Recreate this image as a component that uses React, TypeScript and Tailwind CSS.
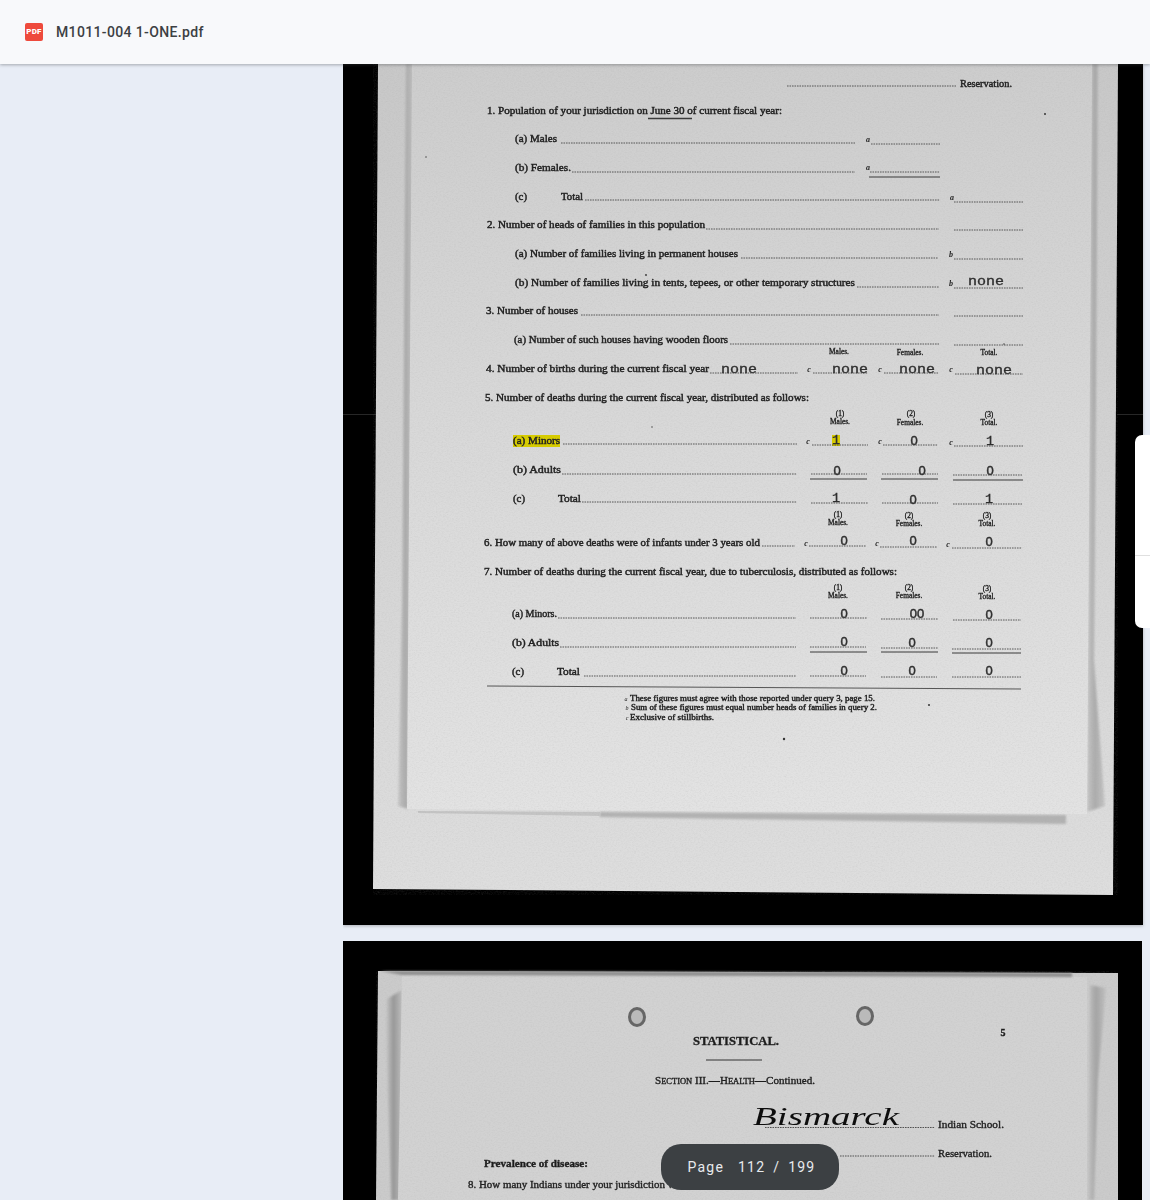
type Txt = [string, number, number, number?] // text, x start, centre y, x end

const FORM_TEXT: Txt[] = [
  ['Reservation.', 960, 84, 1012],
  ['1. Population of your jurisdiction on June 30 of current fiscal year:', 487, 111, 782],
  ['(a) Males', 515, 139, 557],
  ['(b) Females.', 515, 168, 571],
  ['(c)', 515, 197, 527],
  ['Total', 561, 197, 583],
  ['2. Number of heads of families in this population', 487, 225, 705],
  ['(a) Number of families living in permanent houses', 515, 254, 738],
  ['(b) Number of families living in tents, tepees, or other temporary structures', 515, 283, 855],
  ['3. Number of houses', 486, 311, 578],
  ['(a) Number of such houses having wooden floors', 514, 340, 728],
  ['4. Number of births during the current fiscal year', 486, 369, 709],
  ['5. Number of deaths during the current fiscal year, distributed as follows:', 485, 398, 809],
  ['(a) Minors', 513, 441, 560],
  ['(b) Adults', 513, 470, 561],
  ['(c)', 513, 499, 525],
  ['Total', 558, 499, 581],
  ['6. How many of above deaths were of infants under 3 years old', 484, 543, 760],
  ['7. Number of deaths during the current fiscal year, due to tuberculosis, distributed as follows:', 484, 572, 897],
  ['(a) Minors.', 512, 614, 557],
  ['(b) Adults', 512, 643, 559],
  ['(c)', 512, 672, 524],
  ['Total', 557, 672, 580],
]

// column captions: label, centre x, y
const CAPTIONS: [string, number, number][] = [
  ['Males.', 839, 352], ['Females.', 910, 353], ['Total.', 989, 353],
  ['(1)', 840, 414], ['Males.', 840, 422], ['(2)', 911, 414], ['Females.', 910, 423], ['(3)', 989, 415], ['Total.', 989, 423],
  ['(1)', 838, 515], ['Males.', 838, 523], ['(2)', 909, 516], ['Females.', 909, 524], ['(3)', 987, 516], ['Total.', 987, 524],
  ['(1)', 838, 588], ['Males.', 838, 596], ['(2)', 909, 588], ['Females.', 909, 596], ['(3)', 987, 589], ['Total.', 987, 597],
]

const MARKS: [string, number, number][] = [
  ['a', 868, 140], ['a', 868, 168], ['a', 952, 198], ['b', 951, 255], ['b', 951, 284],
  ['c', 809, 370], ['c', 880, 370], ['c', 951, 370],
  ['c', 808, 442], ['c', 880, 442], ['c', 951, 443],
  ['c', 806, 544], ['c', 877, 544], ['c', 948, 545],
]

// dotted rules: x1, x2, y
const DOTTED: [number, number, number][] = [
  [787, 956, 86], [561, 855, 143], [871, 940, 144], [572, 855, 172], [870, 940, 172],
  [585, 940, 200], [954, 1023, 202], [706, 939, 229], [954, 1023, 230], [741, 938, 258], [954, 1023, 259],
  [857, 939, 287], [954, 1023, 288], [581, 939, 315], [954, 1023, 316], [730, 939, 344], [954, 1023, 345],
  [710, 798, 373], [813, 868, 373], [884, 938, 373], [955, 1023, 374],
  [563, 797, 444], [812, 868, 445], [883, 938, 445], [954, 1023, 446],
  [562, 797, 474], [811, 867, 474], [882, 938, 474], [953, 1022, 475],
  [582, 797, 502], [811, 868, 503], [882, 938, 503], [953, 1022, 504],
  [762, 795, 546], [809, 866, 546], [880, 937, 547], [952, 1022, 548],
  [558, 796, 618], [810, 867, 618], [881, 938, 619], [953, 1021, 620],
  [560, 796, 647], [810, 866, 647], [881, 938, 648], [952, 1021, 649],
  [584, 796, 676], [810, 866, 676], [881, 937, 677], [952, 1021, 677],
]

const SOLID: [number, number, number, number][] = [
  [648, 692, 118.5, 1.6], [869, 940, 177, 1.2],
  [810, 867, 479, 1], [881, 938, 479, 1], [953, 1023, 480, 1],
  [810, 867, 652, 1], [881, 938, 652, 1], [952, 1021, 653, 1],
]

// typed answers: text, centre x, y
const TYPED: [string, number, number][] = [
  ['none', 986, 281], ['none', 739, 369], ['none', 850, 369], ['none', 917, 369], ['none', 994, 370],
  ['1', 836, 440], ['0', 914, 440], ['1', 990, 441],
  ['0', 837, 470], ['0', 922, 470], ['0', 990, 470],
  ['1', 836, 498], ['0', 913, 499], ['1', 989, 499],
  ['0', 844, 540], ['0', 913, 540], ['0', 989, 541],
  ['0', 844, 613], ['00', 917, 613], ['0', 989, 614],
  ['0', 844, 641], ['0', 912, 642], ['0', 989, 642],
  ['0', 844, 670], ['0', 912, 670], ['0', 989, 670],
]

const SPECKS: [number, number, number][] = [
  [1045, 114, 1], [646, 275, 0.9], [652, 427, 0.7], [929, 705, 1], [784, 739, 1.2], [426, 157, 0.7], [1004, 344, 0.7],
]

function Line({ t, size = 9.6, heavy = 0.42 }: { t: Txt; size?: number; heavy?: number }) {
  return (
    <text
      x={t[1]}
      y={t[2] + size * 0.3}
      fontSize={size}
      stroke="#222"
      strokeWidth={heavy}
      textLength={t[3] ? t[3] - t[1] : undefined}
      lengthAdjust="spacingAndGlyphs"
    >
      {t[0]}
    </text>
  )
}

function Typed({ s, x, y }: { s: string; x: number; y: number }) {
  if (s === 'none' || s === '1') {
    return (
      <text
        x={x}
        y={y + 4}
        fontSize={13.5}
        textAnchor="middle"
        stroke="#2e2e2e"
        strokeWidth="0.35"
        textLength={s === 'none' ? 36 : undefined}
        lengthAdjust="spacingAndGlyphs"
        className="font-['Liberation_Mono',monospace]"
      >
        {s}
      </text>
    )
  }
  // the typewriter's zero is a plain oval, no slash
  return (
    <text
      x={x}
      y={y + 4.5}
      fontSize={13}
      textAnchor="middle"
      stroke="#2e2e2e"
      strokeWidth="0.45"
      className="font-['Liberation_Sans',sans-serif]"
    >
      {s}
    </text>
  )
}

function Defs({ id }: { id: string }) {
  return (
    <defs>
      <linearGradient id={`${id}-sheet`} x1="0" y1="0" x2="0" y2="1">
        <stop offset="0" stopColor="#cdcdcd" />
        <stop offset="0.5" stopColor="#d9d9d9" />
        <stop offset="1" stopColor="#e3e3e3" />
      </linearGradient>
      <linearGradient id={`${id}-back`} x1="0" y1="0" x2="0" y2="1">
        <stop offset="0" stopColor="#c8c8c8" />
        <stop offset="0.6" stopColor="#d6d6d6" />
        <stop offset="1" stopColor="#dedede" />
      </linearGradient>
      <linearGradient id={`${id}-strip`} x1="0" y1="0" x2="1" y2="0">
        <stop offset="0" stopColor="#c4c4c4" />
        <stop offset="0.45" stopColor="#a4a4a4" />
        <stop offset="1" stopColor="#c2c2c2" />
      </linearGradient>
      <linearGradient id={`${id}-left`} x1="0" y1="0" x2="1" y2="0">
        <stop offset="0" stopColor="#cfcfcf" />
        <stop offset="0.5" stopColor="#8f8f8f" />
        <stop offset="1" stopColor="#bcbcbc" />
      </linearGradient>
      <filter id={`${id}-grain`} x="0" y="0" width="100%" height="100%">
        <feTurbulence type="fractalNoise" baseFrequency="0.55 0.8" numOctaves="2" seed="4" />
        <feColorMatrix values="0 0 0 0 0.35  0 0 0 0 0.35  0 0 0 0 0.35  0.5 0.5 0 0 -0.42" />
      </filter>
      <filter id={`${id}-soft`} x="-5%" y="-5%" width="110%" height="110%">
        <feGaussianBlur stdDeviation="0.32" />
      </filter>
      <filter id={`${id}-blur`} x="-20%" y="-20%" width="140%" height="140%">
        <feGaussianBlur stdDeviation="1.1" />
      </filter>
    </defs>
  )
}

function ScanOne() {
  return (
    <svg viewBox="343 64 800 861" className="block h-full w-full font-['Liberation_Serif',serif]">
      <Defs id="p1" />
      <rect x="343" y="64" width="800" height="861" fill="#000" />
      {/* backing sheet */}
      <polygon points="378,64 1118,64 1113,895 373,889" fill="url(#p1-back)" />
      {/* shadows of the front sheet */}
      <polygon points="406,64 414,64 408,809 398,806 402,600" fill="url(#p1-strip)" filter="url(#p1-blur)" opacity="0.85" />
      <polygon points="1092,64 1098,64 1096,400 1094,660 1105,806 1087,812" fill="url(#p1-strip)" filter="url(#p1-blur)" opacity="0.85" />
      <polygon points="600,812 1066,815 1066,824 600,817" fill="#b2b2b2" filter="url(#p1-blur)" />
      <polygon points="418,811 600,812 600,816 418,813" fill="#c4c4c4" />
      {/* front sheet */}
      <polygon points="412,64 1092,64 1087,814 407,809" fill="url(#p1-sheet)" />
      <polygon points="378,64 1118,64 1113,895 373,889" filter="url(#p1-grain)" opacity="0.4" />

      <rect x="513" y="435" width="47" height="12" fill="#d6cb00" />
      <rect x="832" y="435" width="8" height="11" fill="#d6cb00" />

      {DOTTED.map(([a, b, y], i) => (
        <line key={i} x1={a} x2={b} y1={y} y2={y} stroke="#4a4a4a" strokeWidth="0.9" strokeDasharray="1.6 0.9" />
      ))}
      {SOLID.map(([a, b, y, w], i) => (
        <line key={i} x1={a} x2={b} y1={y} y2={y} stroke="#3a3a3a" strokeWidth={w} />
      ))}
      <line x1="487" x2="1021" y1="686" y2="689" stroke="#555" strokeWidth="1" />
      {SPECKS.map(([x, y, r], i) => (
        <circle key={i} cx={x} cy={y} r={r} fill="#333" />
      ))}

      <g fill="#222" filter="url(#p1-soft)">
        {FORM_TEXT.map((t, i) => (
          <Line key={i} t={t} />
        ))}
        {CAPTIONS.map(([s, x, y], i) => (
          <text key={i} x={x} y={y + 2.4} fontSize={7.4} stroke="#222" strokeWidth="0.32" textAnchor="middle">
            {s}
          </text>
        ))}
        {MARKS.map(([s, x, y], i) => (
          <text key={i} x={x} y={y + 2} fontSize={8} fontStyle="italic" fontWeight={700} textAnchor="middle">
            {s}
          </text>
        ))}
        <Line t={['These figures must agree with those reported under query 3, page 15.', 630, 699, 875]} size={7.6} heavy={0.38} />
        <Line t={['Sum of these figures must equal number heads of families in query 2.', 631, 708, 877]} size={7.6} heavy={0.38} />
        <Line t={['Exclusive of stillbirths.', 630, 718, 714]} size={7.6} heavy={0.38} />
        <text x="626" y="701" fontSize="6" fontStyle="italic" textAnchor="middle">a</text>
        <text x="627" y="710" fontSize="6" fontStyle="italic" textAnchor="middle">b</text>
        <text x="627" y="720" fontSize="6" fontStyle="italic" textAnchor="middle">c</text>
        <g fill="#2e2e2e">
          {TYPED.map(([s, x, y], i) => (
            <Typed key={i} s={s} x={x} y={y} />
          ))}
        </g>
      </g>

      {/* tile seam, only shows on the black margins */}
      <line x1="343" x2="376" y1="414.5" y2="414.5" stroke="#808080" strokeWidth="1" opacity="0.3" />
      <line x1="1117" x2="1143" y1="414.5" y2="414.5" stroke="#808080" strokeWidth="1" opacity="0.3" />
    </svg>
  )
}

function ScanTwo() {
  return (
    <svg viewBox="343 941 799 259" className="block h-full w-full font-['Liberation_Serif',serif]">
      <Defs id="p2" />
      <rect x="343" y="941" width="799" height="259" fill="#000" />
      <polygon points="378,971 1118,973 1118,1200 376,1200" fill="#cbcbcb" />
      <polygon points="385,1000 402,990 402,1200 391,1200" fill="url(#p2-left)" filter="url(#p2-blur)" opacity="0.85" />
      <polygon points="1090,985 1106,988 1098,1080 1094,1200 1088,1200" fill="url(#p2-strip)" filter="url(#p2-blur)" />
      <polygon points="402,975 1087,977 1087,1200 398,1200" fill="#d2d2d2" />
      <polygon points="380,971 1072,973 1072,977 402,975" fill="#8e8e8e" filter="url(#p2-blur)" />
      <polygon points="378,971 1118,973 1118,1200 376,1200" filter="url(#p2-grain)" opacity="0.4" />

      <ellipse cx="637" cy="1017" rx="7.5" ry="8.5" fill="#bababa" stroke="#666" strokeWidth="3" filter="url(#p2-soft)" />
      <ellipse cx="865" cy="1016" rx="7.5" ry="8.5" fill="#bababa" stroke="#666" strokeWidth="3" filter="url(#p2-soft)" />

      <line x1="706" x2="762" y1="1060" y2="1060" stroke="#333" strokeWidth="1" />
      <line x1="765" x2="935" y1="1127.5" y2="1127.5" stroke="#444" strokeWidth="0.9" strokeDasharray="1.6 0.9" />
      <line x1="840" x2="935" y1="1156" y2="1156" stroke="#444" strokeWidth="0.9" strokeDasharray="1.6 0.9" />

      <g fill="#1e1e1e" stroke="#1e1e1e" strokeWidth="0.35" filter="url(#p2-soft)">
        <text x="693" y="1045" fontSize="13" fontWeight="700" textLength="86" lengthAdjust="spacingAndGlyphs">STATISTICAL.</text>
        <text x="1003" y="1036" fontSize="10" fontWeight="700" textAnchor="middle">5</text>
        <text x="655" y="1083.5" fontSize="10.5" textLength="160" lengthAdjust="spacingAndGlyphs">
          S<tspan fontSize="8">ECTION</tspan> III.—H<tspan fontSize="8">EALTH</tspan>—Continued.
        </text>
        <text x="753" y="1125" fontSize="25" fontStyle="italic" fill="#111" strokeWidth="0" textLength="146" lengthAdjust="spacingAndGlyphs">Bismarck</text>
        <text x="938" y="1128" fontSize="10.5" textLength="66" lengthAdjust="spacingAndGlyphs">Indian School.</text>
        <text x="938" y="1157" fontSize="10.5" textLength="54" lengthAdjust="spacingAndGlyphs">Reservation.</text>
        <text x="484" y="1167" fontSize="10.5" fontWeight="700" textLength="104" lengthAdjust="spacingAndGlyphs">Prevalence of disease:</text>
        <text x="468" y="1188" fontSize="10.5" textLength="325" lengthAdjust="spacingAndGlyphs">8. How many Indians under your jurisdiction were vaccinated for disease?</text>
      </g>
    </svg>
  )
}

export default function App() {
  return (
    <div className="relative flex h-[1200px] w-full flex-col overflow-hidden bg-[#e8edf6] font-['Roboto',sans-serif]">
      {/* Top bar */}
      <header className="z-10 flex h-16 shrink-0 items-center gap-[13px] bg-[#f8f9fb] pl-[25px] shadow-[0_1px_3px_rgba(60,64,67,0.4)]">
        <div className="flex h-[18px] w-[18px] items-center justify-center rounded-[2px] bg-[#ee4a3c] font-['Roboto',sans-serif] text-[8px] leading-none font-black tracking-[0.2px] text-white">
          PDF
        </div>
        <span className="text-sm font-medium tracking-[0.36px] text-[#3c4043]">M1011-004 1-ONE.pdf</span>
      </header>

      {/* Document viewer */}
      <main className="flex min-h-0 flex-1">
        <aside className="w-[343px] shrink-0" />
        <section className="flex min-h-0 flex-1 flex-col items-start gap-4 overflow-hidden">
          <div className="h-[861px] w-[800px] shrink-0 shadow-[0_1px_3px_rgba(60,64,67,0.35)]">
            <ScanOne />
          </div>
          <div className="h-[259px] w-[799px] shrink-0 overflow-hidden">
            <ScanTwo />
          </div>
        </section>
      </main>

      {/* Side tabs */}
      <div className="absolute top-[435px] right-0 flex w-[15px] flex-col overflow-hidden rounded-l-[7px] bg-white">
        <div className="h-[121px] border-b border-[#e0e0e0]" />
        <div className="h-[72px]" />
      </div>

      {/* Page counter */}
      <div className="absolute top-[1144px] left-[661px] flex h-[46px] w-[178px] items-center justify-center rounded-[20px] bg-[#3c4043] pl-[3px] text-sm tracking-[1.2px] text-[#e8eaed]">
        <span className="mr-[14px]">Page</span>
        <span>112</span>
        <span className="mx-[8px]">/</span>
        <span>199</span>
      </div>
    </div>
  )
}
